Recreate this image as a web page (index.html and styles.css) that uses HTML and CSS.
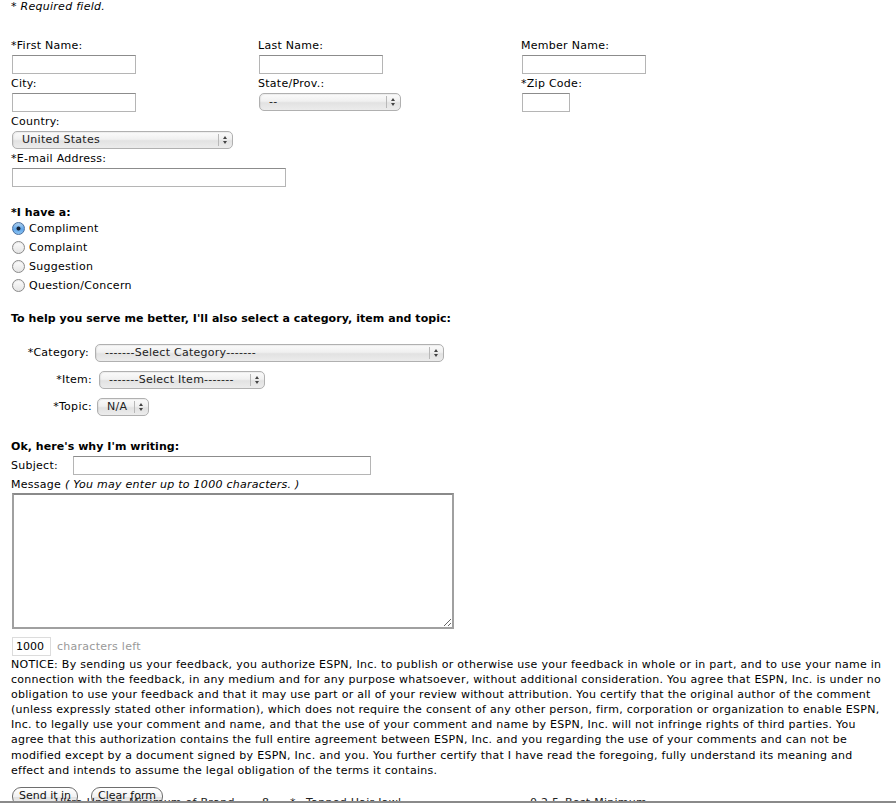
FILE: index.html
```html
<!DOCTYPE html>
<html>
<head>
<meta charset="utf-8">
<title>Feedback</title>
<link rel="stylesheet" href="styles.css">
</head>
<body>
<div class="page">
  <div class="req">* Required field.</div>

  <div class="grid">
    <div class="field"><label class="lbl">*First Name:</label><input class="txt w124" type="text"></div>
    <div class="field"><label class="lbl">Last Name:</label><input class="txt w124" type="text"></div>
    <div class="field"><label class="lbl">Member Name:</label><input class="txt w124" type="text"></div>
    <div class="field"><label class="lbl">City:</label><input class="txt w124" type="text"></div>
    <div class="field"><label class="lbl">State/Prov.:</label>
      <span class="sel w142"><select><option>--</option></select><span class="arr"><svg width="14" height="16" viewBox="0 0 14 16"><line x1="0.5" y1="2" x2="0.5" y2="14" stroke="#b8b8b8"/><path d="M5 7 L7 4 L9 7 Z M5 9 L7 12 L9 9 Z" fill="#444"/></svg></span></span>
    </div>
    <div class="field"><label class="lbl">*Zip Code:</label><input class="txt w48" type="text"></div>
  </div>

  <div class="field country"><label class="lbl">Country:</label>
    <span class="sel w221"><select><option>United States</option></select><span class="arr"><svg width="14" height="16" viewBox="0 0 14 16"><line x1="0.5" y1="2" x2="0.5" y2="14" stroke="#b8b8b8"/><path d="M5 7 L7 4 L9 7 Z M5 9 L7 12 L9 9 Z" fill="#444"/></svg></span></span>
  </div>
  <div class="field email"><label class="lbl">*E-mail Address:</label><input class="txt w274" type="text"></div>

  <div class="bold have">*I have a:</div>
  <div class="radios">
    <label class="radio"><input type="radio" name="t" checked><span>Compliment</span></label>
    <label class="radio"><input type="radio" name="t"><span>Complaint</span></label>
    <label class="radio"><input type="radio" name="t"><span>Suggestion</span></label>
    <label class="radio"><input type="radio" name="t"><span>Question/Concern</span></label>
  </div>

  <div class="bold help">To help you serve me better, I'll also select a category, item and topic:</div>

  <div class="cats">
    <div class="crow r-cat"><span class="clbl">*Category:</span>
      <span class="sel w349"><select><option>-------Select Category-------</option></select><span class="arr"><svg width="14" height="16" viewBox="0 0 14 16"><line x1="0.5" y1="2" x2="0.5" y2="14" stroke="#b8b8b8"/><path d="M5 7 L7 4 L9 7 Z M5 9 L7 12 L9 9 Z" fill="#444"/></svg></span></span>
    </div>
    <div class="crow r-item"><span class="clbl">*Item:</span>
      <span class="sel w166"><select><option>-------Select Item-------</option></select><span class="arr"><svg width="14" height="16" viewBox="0 0 14 16"><line x1="0.5" y1="2" x2="0.5" y2="14" stroke="#b8b8b8"/><path d="M5 7 L7 4 L9 7 Z M5 9 L7 12 L9 9 Z" fill="#444"/></svg></span></span>
    </div>
    <div class="crow r-topic"><span class="clbl">*Topic:</span>
      <span class="sel w52"><select><option>N/A</option></select><span class="arr"><svg width="14" height="16" viewBox="0 0 14 16"><line x1="0.5" y1="2" x2="0.5" y2="14" stroke="#b8b8b8"/><path d="M5 7 L7 4 L9 7 Z M5 9 L7 12 L9 9 Z" fill="#444"/></svg></span></span>
    </div>
  </div>

  <div class="bold why">Ok, here's why I'm writing:</div>
  <div class="subj"><span class="slbl">Subject:</span><input class="txt w298" type="text"></div>
  <div class="msglbl">Message <i>( You may enter up to 1000 characters. )</i></div>
  <textarea class="msg"></textarea>
  <div class="counter"><input class="txt cnt" type="text" value="1000"><span class="left">characters left</span></div>

  <p class="notice">NOTICE: By sending us your feedback, you authorize ESPN, Inc. to publish or otherwise use your feedback in whole or in part, and to use your name in connection with the feedback, in any medium and for any purpose whatsoever, without additional consideration. You agree that ESPN, Inc. is under no obligation to use your feedback and that it may use part or all of your review without attribution. You certify that the original author of the comment (unless expressly stated other information), which does not require the consent of any other person, firm, corporation or organization to enable ESPN, Inc. to legally use your comment and name, and that the use of your comment and name by ESPN, Inc. will not infringe rights of third parties. You agree that this authorization contains the full entire agreement between ESPN, Inc. and you regarding the use of your comments and can not be modified except by a document signed by ESPN, Inc. and you. You further certify that I have read the foregoing, fully understand its meaning and effect and intends to assume the legal obligation of the terms it contains.</p>

  <div class="buttons"><button class="btn">Send it in</button><button class="btn">Clear form</button></div>
</div>
<div class="footer">
  <span class="f1">Ultra Upper, Minimum of Brand</span>
  <span class="f2">8</span>
  <span class="f3">*</span>
  <span class="f4">Tanned Hair Jawl</span>
  <span class="f5">0.2.5</span>
  <span class="f6">Best Minimum</span>
</div>
</body>
</html>
```

FILE: styles.css
```css
html, body {
  margin: 0;
  padding: 0;
  background: #fff;
  overflow: hidden;
}
body {
  font-family: "DejaVu Sans", Verdana, sans-serif;
  font-size: 11px;
  letter-spacing: 0.27px;
  color: #000;
  width: 896px;
  height: 803px;
  position: relative;
}
.page {
  padding: 0 11px 0 11px;
}
.req {
  font-style: italic;
  line-height: 13px;
}
.grid {
  display: grid;
  grid-template-columns: 247px 263px 1fr;
  row-gap: 2px;
  margin-top: 25px;
}
.field {
  display: flex;
  flex-direction: column;
  align-items: flex-start;
}
.lbl {
  display: block;
  line-height: 16px;
}
.field .txt, .field .sel {
  margin-top: 1px;
}
.txt {
  box-sizing: border-box;
  height: 19px;
  margin: 0 0 0 1px;
  border: 1px solid #b5b5b5;
  border-top-color: #8c8c8c;
  background: #fff;
  font-family: "DejaVu Sans", Verdana, sans-serif;
  font-size: 11px;
  padding: 1px 3px;
  outline: none;
}
.w124 { width: 124px; }
.w48 { width: 48px; }
.w274 { width: 274px; }
.w298 { width: 298px; }

.sel {
  position: relative;
  display: inline-block;
  height: 18px;
  margin-left: 1px;
}
.sel select {
  -webkit-appearance: none;
  appearance: none;
  box-sizing: border-box;
  width: 100%;
  height: 18px;
  border: 1px solid #b0b0b0;
  border-radius: 5px;
  background: linear-gradient(#fbfbfb 0%, #f0f0f0 45%, #e2e2e2 55%, #ececec 100%);
  font-family: "DejaVu Sans", Verdana, sans-serif;
  font-size: 11px;
  letter-spacing: 0.27px;
  color: #222;
  padding: 0 16px 0 9px;
  line-height: 16px;
  outline: none;
  box-shadow: inset 1px 1px 1px rgba(0,0,0,0.06);
}
.sel .arr {
  position: absolute;
  right: 1px;
  top: 1px;
  width: 14px;
  height: 16px;
  pointer-events: none;
}
.sel .arr svg { display: block; }
.w142 { width: 142px; }
.w221 { width: 221px; }
.w349 { width: 349px; }
.w166 { width: 166px; }
.w52 { width: 52px; }

.country { margin-top: 2px; }
.country .sel { margin-top: 1px; }
.email { margin-top: 2px; }

.bold { font-weight: bold; line-height: 16px; letter-spacing: 0.05px; }
.have { margin-top: 19px; line-height: 13px; }
.radios {
  display: flex;
  flex-direction: column;
}
.radio {
  display: flex;
  align-items: center;
  height: 19px;
}
.radio input {
  -webkit-appearance: none;
  appearance: none;
  box-sizing: border-box;
  width: 13px;
  height: 13px;
  margin: 0 4px 0 1px;
  border: 1px solid #8a8a8a;
  border-radius: 50%;
  background: linear-gradient(#fdfdfd, #e4e4e4);
  box-shadow: inset 0 1px 1px rgba(0,0,0,0.08);
}
.radio input:checked {
  border-color: #4a6f9e;
  background: radial-gradient(circle at 50% 50%, #152235 0 1.6px, rgba(21,34,53,0) 2.4px),
              linear-gradient(#b6d9f7, #5fa4e8 55%, #8cc4f3);
}
.help { margin-top: 16px; }

.cats { margin-top: 12px; }
.crow {
  display: flex;
  align-items: center;
  height: 27px;
}
.clbl {
  box-sizing: border-box;
  width: 81px;
  text-align: right;
  line-height: 16px;
}
.r-cat .clbl { padding-right: 3px; }
.r-cat .sel { margin-left: 3px; }
.r-item .sel { margin-left: 7px; }
.r-topic .sel { margin-left: 5px; }

.why { margin-top: 19px; }
.subj {
  display: flex;
  align-items: center;
  height: 19px;
  margin-top: 1px;
}
.slbl { width: 61px; }
.subj .txt { margin-left: 1px; }
.msglbl {
  line-height: 16px;
  margin-top: 2px;
}
.msglbl i { font-style: italic; }
.msg {
  display: block;
  box-sizing: border-box;
  width: 442px;
  height: 136px;
  margin: 0 0 0 1px;
  border: 2px solid #a0a0a0;
  border-top-color: #8a8a8a;
  resize: both;
  font-family: "DejaVu Sans", Verdana, sans-serif;
  font-size: 11px;
  outline: none;
}
.counter {
  display: flex;
  align-items: center;
  margin-top: 8px;
}
.cnt {
  width: 39px;
  border-color: #dcdcdc;
  padding: 1px 3px;
}
.left {
  color: #999;
  margin-left: 6px;
}
.notice {
  margin: 1px 0 0 0;
  line-height: 15.1px;
}
.buttons {
  display: flex;
  gap: 13px;
  margin-top: 9px;
  padding-left: 1px;
}
.btn {
  box-sizing: border-box;
  height: 19px;
  padding: 0 6px;
  border: 1px solid #6e6e6e;
  border-radius: 9px;
  background: linear-gradient(#ffffff 0%, #f2f2f2 50%, #e2e2e2 55%, #f4f4f4 100%);
  font-family: "DejaVu Sans", Verdana, sans-serif;
  font-size: 11px;
  letter-spacing: 0;
  color: #111;
  line-height: 16px;
}
.footer {
  position: absolute;
  left: 0;
  top: 796px;
  width: 896px;
  height: 5px;
  overflow: hidden;
  border-bottom: 2px solid #8a8a8a;
  font-family: "DejaVu Sans", Verdana, sans-serif;
  font-size: 11px;
  color: #222;
}
.footer span {
  position: absolute;
  top: 0;
  line-height: 14px;
}
.f1 { left: 55px; }
.f2 { left: 262px; }
.f3 { left: 290px; }
.f4 { left: 306px; }
.f5 { left: 530px; }
.f6 { left: 565px; }
```
